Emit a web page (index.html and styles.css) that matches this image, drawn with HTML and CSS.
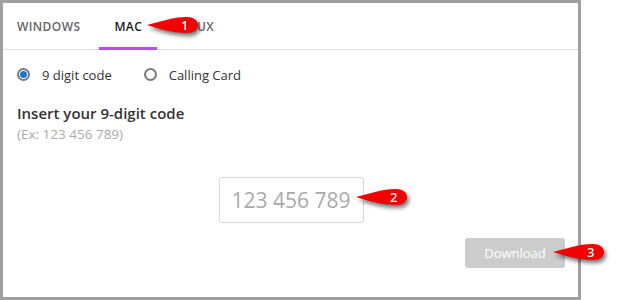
FILE: index.html
```html
<!DOCTYPE html>
<html>
<head>
<meta charset="utf-8">
<link rel="stylesheet" href="styles.css">
</head>
<body>
<div class="frame">
  <div class="tabs">
    <div class="tab first">WINDOWS</div>
    <div class="tab active">MAC</div>
    <div class="tab">LINUX</div>
  </div>
  <div class="content">
    <div class="radios">
      <label class="radio"><span class="dot checked"></span>9 digit code</label>
      <label class="radio"><span class="dot"></span>Calling Card</label>
    </div>
    <div class="heading">Insert your 9-digit code</div>
    <div class="hint">(Ex: 123 456 789)</div>
    <div class="field-row">
      <div class="field">123 456 789</div>
    </div>
    <div class="actions">
      <div class="btn">Download</div>
    </div>
  </div>
</div>

<svg class="callout c1" width="60" height="24" viewBox="0 0 60 24"><path d="M1 9 C14 6 26 1 41 1 C47 1 52 4 52 9 C52 14 47 17 41 17 C26 17 14 13 1 9 Z" fill="#f40000"/><text x="35" y="14" fill="#fff">1</text></svg>
<svg class="callout c2" width="60" height="24" viewBox="0 0 60 24"><path d="M1 9 C14 6 26 1 41 1 C47 1 52 4 52 9 C52 14 47 17 41 17 C26 17 14 13 1 9 Z" fill="#f40000"/><text x="35" y="14" fill="#fff">2</text></svg>
<svg class="callout c3" width="60" height="24" viewBox="0 0 60 24"><path d="M1 9 C14 6 26 1 41 1 C47 1 52 4 52 9 C52 14 47 17 41 17 C26 17 14 13 1 9 Z" fill="#f40000"/><text x="35" y="14" fill="#fff">3</text></svg>
</body>
</html>
```
FILE: styles.css
```css
html, body {
  margin: 0;
  padding: 0;
  background: #fff;
}
body {
  font-family: "Open Sans", "Noto Sans", sans-serif;
  position: relative;
  width: 632px;
  height: 300px;
  overflow: hidden;
}
.frame {
  width: 581px;
  height: 300px;
  box-sizing: border-box;
  border: 3px solid #a0a0a0;
  display: flex;
  flex-direction: column;
}
.tabs {
  display: flex;
  align-items: center;
  height: 47px;
  box-sizing: border-box;
  border-bottom: 1px solid #dcdcdc;
  padding-left: 14px;
}
.tab {
  position: relative;
  height: 46px;
  display: flex;
  align-items: center;
  padding: 0 15px;
  margin-left: 4px;
  font-size: 12px;
  font-weight: 600;
  color: #666;
  letter-spacing: 0.4px;
}
.tab.first {
  padding-left: 0;
  margin-left: 0;
}
.tab.active {
  color: #1a1a1a;
}
.tab.active::after {
  content: "";
  position: absolute;
  left: 0;
  right: 0;
  bottom: -1px;
  height: 3px;
  background: #b64cf2;
}
.content {
  flex: 1;
  display: flex;
  flex-direction: column;
  padding: 0 13px 0 14px;
}
.radios {
  display: flex;
  gap: 32px;
  margin-top: 17px;
  height: 15px;
  align-items: center;
}
.radio {
  display: flex;
  align-items: center;
  gap: 12px;
  font-size: 13px;
  color: #333;
}
.dot {
  width: 13px;
  height: 13px;
  box-sizing: border-box;
  border: 2px solid #7a7a7a;
  border-radius: 50%;
  display: flex;
  align-items: center;
  justify-content: center;
}
.dot.checked::after {
  content: "";
  width: 7px;
  height: 7px;
  border-radius: 50%;
  background: #1877c9;
}
.heading {
  margin-top: 21px;
  font-size: 15px;
  font-weight: 600;
  color: #333;
  line-height: 20px;
}
.hint {
  font-size: 13.5px;
  color: #aaa;
  line-height: 20px;
  margin-top: 1px;
}
.field-row {
  display: flex;
  justify-content: center;
  margin-top: 33px;
}
.field {
  width: 145px;
  height: 46px;
  box-sizing: border-box;
  border: 1px solid #d6d6d6;
  border-radius: 3px;
  display: flex;
  align-items: center;
  justify-content: center;
  font-size: 21px;
  color: #aaa;
}
.actions {
  display: flex;
  justify-content: flex-end;
  margin-top: 15px;
}
.btn {
  width: 100px;
  height: 30px;
  border-radius: 3px;
  background: #cccccc;
  color: #fff;
  font-size: 13px;
  display: flex;
  align-items: center;
  justify-content: center;
}
.callout {
  position: absolute;
  filter: drop-shadow(2px 3px 2px rgba(0, 0, 0, 0.55));
  overflow: visible;
}
.callout text {
  font-family: "Open Sans", sans-serif;
  font-size: 13px;
  font-weight: 600;
}
.c1 { left: 146px; top: 16px; }
.c2 { left: 355px; top: 188px; }
.c3 { left: 552px; top: 243px; }
```
